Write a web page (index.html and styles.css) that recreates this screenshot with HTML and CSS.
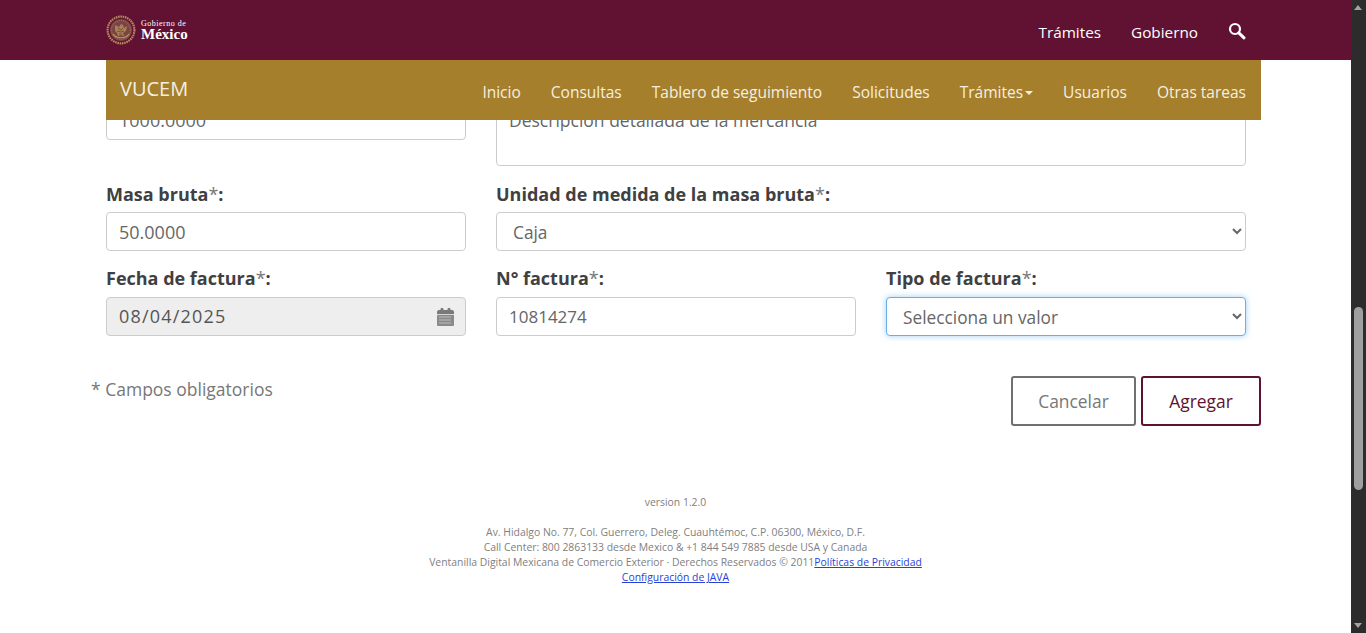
FILE: index.html
```html
<!DOCTYPE html>
<html lang="es">
<head>
<meta charset="utf-8">
<title>VUCEM</title>
<link rel="stylesheet" href="styles.css">
</head>
<body>
<header class="topbar">
  <div class="topbar-inner">
    <a class="logo" href="#">
      <svg class="seal" width="30" height="30" viewBox="0 0 30 30" aria-hidden="true">
        <circle cx="15" cy="15" r="13.4" fill="none" stroke="#b58a5c" stroke-width="2.2" stroke-dasharray="1.6 .7"/>
        <circle cx="15" cy="15" r="11" fill="#7a4443"/>
        <circle cx="15" cy="15" r="9.4" fill="none" stroke="#a97f55" stroke-width=".9" stroke-dasharray="1.2 1"/>
        <path d="M9 10l4 2 2-3 2 1 1 3 3-2-1 5-3 2 1 3-3-1-3 1-1-3-2-2z" fill="#a88058"/>
        <path d="M12 13l3 2 2-2M11 16l4 1 3-1M13 19h3" fill="none" stroke="#6f3c3c" stroke-width=".8"/>
        <path d="M7 19c3 5 13 5 16 0" fill="none" stroke="#c19868" stroke-width="1.2"/>
      </svg>
      <span class="logo-text"><span class="logo-small">Gobierno de</span><span class="logo-big">México</span></span>
    </a>
    <nav class="topnav">
      <a href="#">Trámites</a>
      <a href="#">Gobierno</a>
      <svg class="search" width="18" height="18" viewBox="0 0 18 18" aria-hidden="true">
        <circle cx="7" cy="7" r="5" fill="none" stroke="#fff" stroke-width="2.2"/>
        <path d="M10.8 10.8l5.2 5" stroke="#fff" stroke-width="3" stroke-linecap="round"/>
      </svg>
    </nav>
  </div>
</header>
<div class="subbar">
  <a class="brand" href="#">VUCEM</a>
  <nav class="subnav">
    <a href="#">Inicio</a>
    <a href="#">Consultas</a>
    <a href="#">Tablero de seguimiento</a>
    <a href="#">Solicitudes</a>
    <a href="#">Trámites<span class="caret"></span></a>
    <a href="#">Usuarios</a>
    <a href="#">Otras tareas</a>
  </nav>
</div>

<main class="page">
  <form class="form">
    <div class="row row-first">
      <div class="col"><input class="control raised" value="1000.0000"></div>
      <div class="col col-wide"><textarea class="control area">Descripción detallada de la mercancía</textarea></div>
    </div>
    <div class="row row-snug">
      <div class="col">
        <label class="lbl">Masa bruta<span class="req">*</span>:</label>
        <input class="control" value="50.0000">
      </div>
      <div class="col col-wide">
        <label class="lbl">Unidad de medida de la masa bruta<span class="req">*</span>:</label>
        <select class="control pick"><option>Caja</option></select>
      </div>
    </div>
    <div class="row">
      <div class="col">
        <label class="lbl">Fecha de factura<span class="req">*</span>:</label>
        <div class="datebox">
          <span class="datevalue">08/04/2025</span>
          <svg class="cal" width="17" height="18" viewBox="0 0 17 18" aria-hidden="true">
            <path d="M0 4a2 2 0 0 1 2-2h13a2 2 0 0 1 2 2v2H0z" fill="#7a7a7a"/>
            <rect x="3.5" y="0" width="3" height="3" rx="1" fill="#7a7a7a"/>
            <rect x="10.5" y="0" width="3" height="3" rx="1" fill="#7a7a7a"/>
            <rect x="0" y="6.8" width="17" height="11.2" rx="1" fill="#8a8a8a"/>
            <path d="M2.5 9h12M2.5 12h12M2.5 15h12" stroke="#eee" stroke-width="1" stroke-dasharray="1 1"/>
          </svg>
        </div>
      </div>
      <div class="col">
        <label class="lbl">N° factura<span class="req">*</span>:</label>
        <input class="control tight" value="10814274">
      </div>
      <div class="col">
        <label class="lbl">Tipo de factura<span class="req">*</span>:</label>
        <select class="control pick focus"><option>Selecciona un valor</option></select>
      </div>
    </div>
    <div class="actions">
      <p class="note">* Campos obligatorios</p>
      <div class="buttons">
        <button type="button" class="btn btn-cancel">Cancelar</button>
        <button type="button" class="btn btn-add">Agregar</button>
      </div>
    </div>
  </form>
  <footer class="foot">
    <p class="version">version 1.2.0</p>
    <p>Av. Hidalgo No. 77, Col. Guerrero, Deleg. Cuauhtémoc, C.P. 06300, México, D.F.</p>
    <p>Call Center: 800 2863133 desde Mexico &amp; +1 844 549 7885 desde USA y Canada</p>
    <p>Ventanilla Digital Mexicana de Comercio Exterior · Derechos Reservados © 2011<a href="#">Políticas de Privacidad</a></p>
    <p><a href="#">Configuración de JAVA</a></p>
  </footer>
</main>

<div class="scrollbar" aria-hidden="true">
  <span class="arrow arrow-up"></span>
  <span class="thumb"></span>
  <span class="arrow arrow-down"></span>
</div>
</body>
</html>
```
FILE: styles.css
```css
* { box-sizing: border-box; }
html, body { height: 100%; }
body {
  margin: 0;
  overflow: hidden;
  background: #fff;
  color: #404041;
  font-family: "Open Sans", "Noto Sans", sans-serif;
  font-size: 18px;
}
a { text-decoration: none; color: inherit; }
p { margin: 0; }

/* Overlaid fixed bars */
.topbar {
  position: fixed;
  top: 0; left: 0; right: 15px;
  height: 60px;
  background: #611232;
  z-index: 3;
}
.topbar-inner {
  margin: 0 105px 0 106px;
  height: 100%;
  display: flex;
  align-items: center;
  justify-content: space-between;
}
.logo { display: flex; align-items: center; gap: 5px; color: #fff; margin-top: -1px; }
.logo-text { display: flex; flex-direction: column; font-family: "Liberation Serif", serif; }
.logo-small { font-size: 8px; line-height: 8px; letter-spacing: .5px; }
.logo-big { font-size: 15px; line-height: 12px; font-weight: 700; }
.topnav { display: flex; align-items: center; gap: 30px; margin-top: 3px; font-size: 15.3px; color: #fff; }
.search { margin-top: -2px; }

.subbar {
  position: fixed;
  top: 60px; left: 106px;
  width: 1155px;
  height: 60px;
  background: #a57f2c;
  color: #f5efe0;
  z-index: 3;
  display: flex;
  align-items: center;
  justify-content: space-between;
  padding: 0 15px 0 14px;
  font-size: 15.5px;
}
.brand { font-size: 20px; margin-top: -3px; }
.subnav { display: flex; gap: 30px; margin-top: 3px; }
.caret {
  display: inline-block;
  margin-left: 2px;
  vertical-align: middle;
  border-top: 4px solid #f5efe0;
  border-left: 4px solid transparent;
  border-right: 4px solid transparent;
}

/* Page flow */
.page { width: 1351px; padding: 101px 105px 0 106px; }
.row { display: flex; gap: 30px; margin-bottom: 17px; }
.row-first { margin-bottom: 0; height: 83px; }
.col { flex: none; width: 360px; display: flex; flex-direction: column; }
.col-wide { width: 750px; }
.lbl { font-weight: 700; font-size: 18px; line-height: 21px; margin-bottom: 8px; color: #404041; }
.row-snug .lbl { margin-bottom: 7px; }
.req { font-weight: 400; color: #777; }
.control {
  display: block;
  width: 100%;
  height: 39px;
  border: 1px solid #ccc;
  border-radius: 4px;
  background: #fff;
  padding: 0 12px;
  font-family: inherit;
  font-size: 18px;
  color: #666;
  outline: none;
}
.raised { padding-bottom: 2px; }
.tight { font-size: 17px; }
.area { height: 65px; padding: 5px 12px; font-size: 17.5px; line-height: 27px; resize: none; overflow: hidden; }
.pick { font-size: 17.3px; padding-top: 2px; }
.focus { border-color: #66afe9; box-shadow: 0 0 6px rgba(102,175,233,.6); }
.datebox {
  height: 39px;
  display: flex;
  align-items: center;
  justify-content: space-between;
  padding: 0 11px 0 12px;
  border: 1px solid #ccc;
  border-radius: 4px;
  background: #eee;
  color: #555;
  letter-spacing: 1.2px;
}
.datevalue { margin-top: -2px; }
.cal { flex: none; }

.actions { display: flex; justify-content: space-between; align-items: flex-start; margin: 40px -15px 0 -15px; }
.note { color: #777; font-size: 17.5px; line-height: 26px; }
.buttons { display: flex; gap: 5px; }
.btn {
  height: 50px;
  border-radius: 3px;
  background: #fff;
  border: 2px solid;
  font-family: inherit;
  font-size: 17.4px;
}
.btn-cancel { width: 125px; border-color: #707070; color: #777; }
.btn-add { width: 120px; border-color: #611232; color: #611232; }

.foot {
  margin: 69px 0 0 -106px;
  width: 1351px;
  text-align: center;
  font-size: 10.4px;
  line-height: 15px;
  color: #808080;
}
.foot a { color: #2a3fd6; text-decoration: underline; }
.version { margin-bottom: 15px; }

/* Painted window scrollbar */
.scrollbar {
  position: fixed;
  top: 0; right: 0; bottom: 0;
  width: 15px;
  background: #2c2c2c;
  z-index: 4;
}
.thumb {
  position: absolute;
  left: 3px; right: 3px;
  top: 307px;
  height: 183px;
  border-radius: 5px;
  background: #9f9f9f;
}
.arrow {
  position: absolute;
  left: 3px;
  border-left: 4.5px solid transparent;
  border-right: 4.5px solid transparent;
}
.arrow-up { top: 5px; border-bottom: 5px solid #a3a3a3; }
.arrow-down { bottom: 5px; border-top: 5px solid #a3a3a3; }
```
